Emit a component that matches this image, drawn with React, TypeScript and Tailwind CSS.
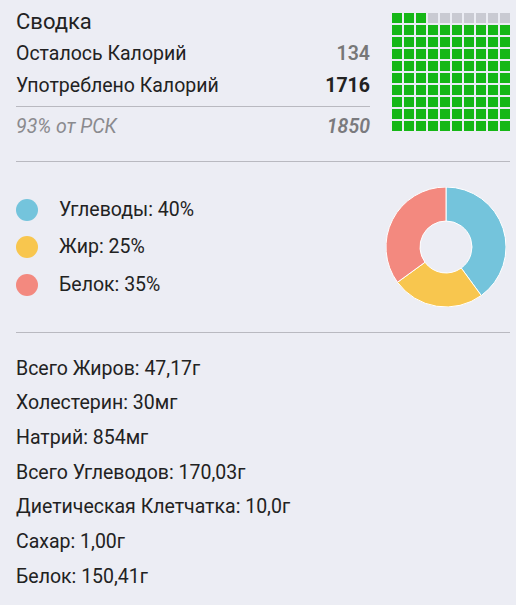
import React from 'react';

const nutrients = [
  'Всего Жиров: 47,17г',
  'Холестерин: 30мг',
  'Натрий: 854мг',
  'Всего Углеводов: 170,03г',
  'Диетическая Клетчатка: 10,0г',
  'Сахар: 1,00г',
  'Белок: 150,41г',
];

const macros = [
  { label: 'Углеводы: 40%', color: 'bg-[#74c4dc]' },
  { label: 'Жир: 25%', color: 'bg-[#f8c64e]' },
  { label: 'Белок: 35%', color: 'bg-[#f3897f]' },
];

// 10x10 waffle, remaining cells greyed out at the end of the first row
const CalorieGrid: React.FC<{ filled: number }> = ({ filled }) => {
  const firstGrey = 10 - (100 - filled);
  return (
    <div className="grid grid-cols-[repeat(10,10px)] gap-[2px]">
      {Array.from({ length: 100 }, (_, i) => (
        <div
          key={i}
          className={`h-[10px] w-[10px] ${i >= firstGrey && i < 10 ? 'bg-[#c9cad2]' : 'bg-[#16b716]'}`}
        />
      ))}
    </div>
  );
};

const Donut: React.FC = () => (
  <svg width="120" height="120" viewBox="0 0 120 120">
    <path d="M60 0 A60 60 0 0 1 95.27 108.54 L75.28 81.03 A26 26 0 0 0 60 34 Z" fill="#74c4dc" stroke="#ffffff" strokeWidth="1" />
    <path d="M95.27 108.54 A60 60 0 0 1 11.46 95.27 L38.97 75.28 A26 26 0 0 0 75.28 81.03 Z" fill="#f8c64e" stroke="#ffffff" strokeWidth="1" />
    <path d="M11.46 95.27 A60 60 0 0 1 60 0 L60 34 A26 26 0 0 0 38.97 75.28 Z" fill="#f3897f" stroke="#ffffff" strokeWidth="1" />
  </svg>
);

const App: React.FC = () => {
  return (
    <div className="min-h-[605px] bg-[#ecedf4] pl-4 pr-[6px] font-['Roboto',sans-serif] text-[#222222]">
      <div className="flex items-start">
        <div className="w-[355px] pt-[6px]">
          <h2 className="text-[22px] leading-[32px]">Сводка</h2>
          <div className="flex h-[32px] items-center justify-between text-[19.5px]">
            <span>Осталось Калорий</span>
            <span className="font-semibold text-[#777777]">134</span>
          </div>
          <div className="flex h-[32px] items-center justify-between text-[19.5px]">
            <span>Употреблено Калорий</span>
            <span className="font-bold">1716</span>
          </div>
          <div className="mt-[4px] border-t border-[#b9b9c0]" />
          <div className="flex h-[40px] items-center justify-between text-[19.5px] italic text-[#8a8a8e]">
            <span>93% от РСК</span>
            <span className="font-semibold text-[#7a7a7e]">1850</span>
          </div>
        </div>
        <div className="ml-[22px] mt-[13px]">
          <CalorieGrid filled={93} />
        </div>
      </div>

      <div className="mt-[14px] border-t border-[#b9b9c0]" />

      <div className="flex h-[170px] items-center justify-between">
        <div className="flex flex-col">
          {macros.map((m) => (
            <div key={m.label} className="flex h-[37.5px] items-center">
              <span className={`h-[22px] w-[22px] rounded-full ${m.color}`} />
              <span className="ml-[21px] text-[19.5px]">{m.label}</span>
            </div>
          ))}
        </div>
        <div className="mr-[4px]">
          <Donut />
        </div>
      </div>

      <div className="border-t border-[#b9b9c0]" />

      <div className="pt-[18px]">
        {nutrients.map((n) => (
          <div key={n} className="flex h-[34.7px] items-center text-[19.5px]">
            {n}
          </div>
        ))}
      </div>
    </div>
  );
};

export default App;
